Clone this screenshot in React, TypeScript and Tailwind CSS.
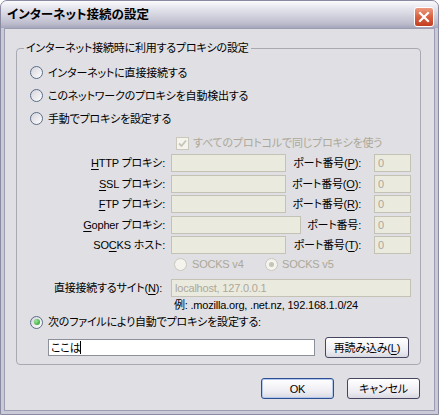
import React from "react";

const disabledInput =
  "h-[18px] border border-[#c4c2b5] bg-[#ebeadf] px-[3px] text-[#aca899] outline-none";

function Radio({ checked, disabled }: { checked?: boolean; disabled?: boolean }) {
  return (
    <span
      className={
        disabled
          ? "flex h-[13px] w-[13px] shrink-0 items-center justify-center rounded-full border border-[#cac8bb] bg-[#f4f3ee]"
          : "flex h-[13px] w-[13px] shrink-0 items-center justify-center rounded-full border border-[#5c6d88] bg-[linear-gradient(135deg,#d3d3dc,#ffffff)]"
      }
    >
      {checked && (
        <span
          className={
            disabled
              ? "h-[5px] w-[5px] rounded-full bg-[#c6c4b6]"
              : "h-[6px] w-[6px] rounded-full bg-[radial-gradient(circle_at_35%_35%,#9be89b,#1a961a)]"
          }
        />
      )}
    </span>
  );
}

function U({ children }: { children: React.ReactNode }) {
  return <span className="underline underline-offset-[2px]">{children}</span>;
}

function ProxyRow({
  label,
  port,
  wide,
}: {
  label: React.ReactNode;
  port: React.ReactNode;
  wide?: boolean;
}) {
  return (
    <div className="flex h-[18px] items-center">
      <div className="w-[135px] whitespace-nowrap text-right">{label}</div>
      <input
        readOnly
        value=""
        className={`ml-[6px] ${wide ? "w-[130px]" : "w-[115px]"} ${disabledInput}`}
      />
      <div className="flex-1 whitespace-nowrap text-right">{port}</div>
      <input readOnly value="0" className={`ml-[13px] w-[37px] ${disabledInput}`} />
    </div>
  );
}

function Button({ children, primary }: { children: React.ReactNode; primary?: boolean }) {
  return (
    <button
      className={
        primary
          ? "flex h-[21px] w-[73px] items-center justify-center rounded-[3px] border border-[#2d4e92] bg-[linear-gradient(to_bottom,#ffffff,#ecebf1_70%,#d9d9e2)] shadow-[inset_0_0_0_1px_#b4c8ec]"
          : "flex h-[21px] w-[73px] items-center justify-center rounded-[3px] border border-[#45455f] bg-[linear-gradient(to_bottom,#ffffff,#ecebf1_70%,#d9d9e2)]"
      }
    >
      {children}
    </button>
  );
}

export default function App() {
  return (
    <div className="flex h-[415px] w-[439px] flex-col overflow-hidden rounded-t-[7px] border border-[#8a8aa2] bg-[#c9c9d7] font-['Liberation_Sans','Noto_Sans_CJK_JP',sans-serif] text-[11px] leading-[14px] tracking-[-0.2px] text-black [font-feature-settings:'palt']">
      {/* title bar */}
      <div className="flex h-[27px] shrink-0 items-start bg-[linear-gradient(to_bottom,#fbfbfd_0%,#e6e6ee_25%,#d2d2de_55%,#bbbbcc_85%,#a6a6bb_100%)]">
        <div className="pl-[6px] pt-[7px] text-[12.5px] font-bold leading-[14px] tracking-normal">インターネット接続の設定</div>
        <div className="ml-auto mr-[4px] mt-[6px] flex h-[20px] w-[20px] items-center justify-center rounded-[3px] border border-white bg-[linear-gradient(to_bottom,#ec9a80,#d8603f_50%,#c23f22)]">
          <svg width="12" height="12" viewBox="0 0 12 12">
            <path d="M2 2 L10 10 M10 2 L2 10" stroke="white" strokeWidth="2.2" strokeLinecap="square" />
          </svg>
        </div>
      </div>

      <div className="flex flex-1 flex-col px-[3px] pb-[3px]">
        <div className="flex flex-1 flex-col border border-[#9c9cb2] bg-[#e0dfe3]">
          <fieldset className="ml-[11px] mt-[12px] w-[405px] rounded-[4px] border border-[#a9a9b4] pb-[6px]">
            <legend className="ml-[7px] px-[2px] leading-[14px]">インターネット接続時に利用するプロキシの設定</legend>
            <div className="flex flex-col pl-[13px] pr-[9px] pt-[6px]">
              <div className="flex h-[23px] items-center gap-[5px]">
                <Radio />
                <span>インターネットに直接接続する</span>
              </div>
              <div className="flex h-[23px] items-center gap-[5px]">
                <Radio />
                <span>このネットワークのプロキシを自動検出する</span>
              </div>
              <div className="flex h-[23px] items-center gap-[5px]">
                <Radio />
                <span>手動でプロキシを設定する</span>
              </div>

              <div className="ml-[146px] mt-[3px] flex h-[20px] items-center gap-[4px] text-[#aca899]">
                <span className="flex h-[13px] w-[13px] items-center justify-center border border-[#cac8bb] bg-[#f4f3ee]">
                  <svg width="9" height="9" viewBox="0 0 9 9">
                    <path d="M1 4.5 L3.5 7 L8 1.5" fill="none" stroke="#c6c4b6" strokeWidth="1.8" />
                  </svg>
                </span>
                <span>すべてのプロトコルで同じプロキシを使う</span>
              </div>

              <div className="mt-[1px] flex flex-col gap-[2.5px]">
                <ProxyRow label={<><U>H</U>TTP プロキシ:</>} port={<>ポート番号(<U>P</U>):</>} />
                <ProxyRow label={<><U>S</U>SL プロキシ:</>} port={<>ポート番号(<U>O</U>):</>} />
                <ProxyRow label={<><U>F</U>TP プロキシ:</>} port={<>ポート番号(<U>R</U>):</>} />
                <ProxyRow label={<><U>G</U>opher プロキシ:</>} port={<>ポート番号:</>} wide />
                <ProxyRow label={<>SO<U>C</U>KS ホスト:</>} port={<>ポート番号(<U>T</U>):</>} />
              </div>

              <div className="ml-[144px] mt-[1px] flex h-[18px] items-center text-[#aca899]">
                <div className="flex w-[91px] items-center gap-[5px]">
                  <Radio disabled />
                  <span>SOCKS v4</span>
                </div>
                <div className="flex items-center gap-[4px]">
                  <Radio disabled checked />
                  <span>SOCKS v5</span>
                </div>
              </div>

              <div className="mt-[6px] flex h-[18px] items-center">
                <div className="w-[135px] whitespace-nowrap pr-[3px] text-right">
                  直接接続するサイト(<U>N</U>):
                </div>
                <input
                  readOnly
                  value="localhost, 127.0.0.1"
                  className={`ml-[6px] flex-1 ${disabledInput}`}
                />
              </div>
              <div className="ml-[144px] flex h-[16px] items-center">例: .mozilla.org, .net.nz, 192.168.1.0/24</div>

              <div className="flex h-[18px] items-center gap-[5px]">
                <Radio checked />
                <span>次のファイルにより自動でプロキシを設定する:</span>
              </div>

              <div className="mt-[6px] flex h-[21px] items-center">
                <div className="ml-[18px] flex h-[17px] w-[267px] items-center border border-[#8c8f9c] bg-white px-[2px]">
                  <span>ここは</span>
                  <span className="h-[13px] w-px bg-black" />
                </div>
                <button className="ml-[10px] flex h-[21px] w-[84px] items-center justify-center rounded-[3px] border border-[#45455f] bg-[linear-gradient(to_bottom,#ffffff,#ecebf1_70%,#d9d9e2)]">
                  再読み込み(<U>L</U>)
                </button>
              </div>
            </div>
          </fieldset>

          <div className="mt-[13px] flex justify-end gap-[13px] pr-[14px]">
            <Button primary>OK</Button>
            <Button>キャンセル</Button>
          </div>
        </div>
      </div>
    </div>
  );
}
